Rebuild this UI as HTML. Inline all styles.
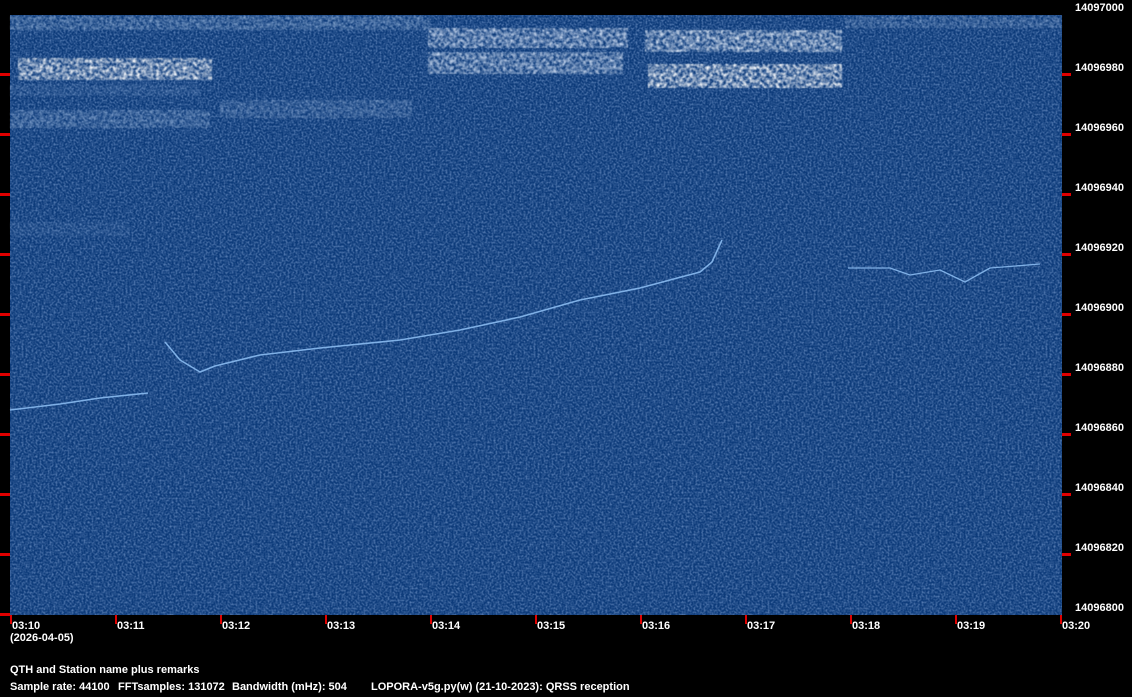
<!DOCTYPE html>
<html><head><meta charset="utf-8"><style>
html,body{margin:0;padding:0;background:#000;width:1132px;height:697px;overflow:hidden}
svg{display:block}
text{font-family:"Liberation Sans",sans-serif;font-weight:bold;font-size:11px;fill:#fff}
</style></head><body>
<svg width="1132" height="697" viewBox="0 0 1132 697">
<defs>
<filter id="n" x="0" y="0" width="100%" height="100%">
<feTurbulence type="fractalNoise" baseFrequency="0.5" numOctaves="2" seed="3" result="t"/>
<feColorMatrix type="matrix" values="0 0 0 0 0.45  0 0 0 0 0.62  0 0 0 0 0.95  1.5 0 0 0 -0.55" in="t"/>
</filter>
<filter id="b"><feTurbulence type="fractalNoise" baseFrequency="0.3" numOctaves="2" seed="7" result="t"/>
<feColorMatrix type="matrix" values="0 0 0 0 1  0 0 0 0 1  0 0 0 0 1  2.2 0 0 0 -0.75" in="t" result="m"/>
<feComposite in="SourceGraphic" in2="m" operator="in"/><feGaussianBlur stdDeviation="0.4"/></filter>
</defs>
<rect x="10" y="15" width="1052" height="600" fill="#0d3b7a"/>
<rect x="10" y="15" width="1052" height="600" filter="url(#n)" opacity="0.6"/>
<g filter="url(#b)">
<rect x="10" y="16" width="420" height="14" fill="#bcd3f0" opacity="0.5"/>
<rect x="845" y="16" width="217" height="12" fill="#bcd3f0" opacity="0.4"/>
<rect x="18" y="58" width="194" height="22" fill="#fff"/>
<rect x="10" y="84" width="190" height="12" fill="#9ab8e0" opacity="0.3"/>
<rect x="10" y="110" width="200" height="18" fill="#b8cfee" opacity="0.5"/>
<rect x="220" y="100" width="192" height="18" fill="#b8cfee" opacity="0.4"/>
<rect x="428" y="28" width="200" height="20" fill="#e6f0ff" opacity="0.85"/>
<rect x="428" y="52" width="195" height="22" fill="#e6f0ff" opacity="0.8"/>
<rect x="645" y="30" width="197" height="22" fill="#f0f6ff" opacity="0.9"/>
<rect x="648" y="64" width="194" height="24" fill="#fff"/>
<rect x="10" y="222" width="120" height="14" fill="#9ab8e0" opacity="0.2"/>
</g>
<g fill="none" stroke="#7fb0e6" stroke-width="1.6" stroke-linejoin="round">
<polyline points="10,410 60,404 100,398 148,393"/>
<polyline points="165,342 180,360 200,372 215,366 260,355 320,348 400,340 460,330 520,317 580,300 640,288 700,272 712,262 722,240"/>
<polyline stroke-width="1.3" points="848,268 890,268 910,275 940,270 965,282 990,268 1040,264"/>
</g>
<g fill="#e00000">
<rect x="0" y="73" width="10" height="3"/><rect x="0" y="133" width="10" height="3"/><rect x="0" y="193" width="10" height="3"/><rect x="0" y="253" width="10" height="3"/><rect x="0" y="313" width="10" height="3"/><rect x="0" y="373" width="10" height="3"/><rect x="0" y="433" width="10" height="3"/><rect x="0" y="493" width="10" height="3"/><rect x="0" y="553" width="10" height="3"/><rect x="0" y="613" width="10" height="3"/>
<rect x="1062" y="73" width="9" height="3"/><rect x="1062" y="133" width="9" height="3"/><rect x="1062" y="193" width="9" height="3"/><rect x="1062" y="253" width="9" height="3"/><rect x="1062" y="313" width="9" height="3"/><rect x="1062" y="373" width="9" height="3"/><rect x="1062" y="433" width="9" height="3"/><rect x="1062" y="493" width="9" height="3"/><rect x="1062" y="553" width="9" height="3"/>
<rect x="10" y="615" width="2" height="9"/><rect x="115" y="615" width="2" height="9"/><rect x="220" y="615" width="2" height="9"/><rect x="325" y="615" width="2" height="9"/><rect x="430" y="615" width="2" height="9"/><rect x="535" y="615" width="2" height="9"/><rect x="640" y="615" width="2" height="9"/><rect x="745" y="615" width="2" height="9"/><rect x="850" y="615" width="2" height="9"/><rect x="955" y="615" width="2" height="9"/><rect x="1060" y="615" width="2" height="9"/>
</g>
<g>
<text x="1075" y="11">14097000</text><text x="1075" y="71">14096980</text><text x="1075" y="131">14096960</text><text x="1075" y="191">14096940</text><text x="1075" y="251">14096920</text><text x="1075" y="311">14096900</text><text x="1075" y="371">14096880</text><text x="1075" y="431">14096860</text><text x="1075" y="491">14096840</text><text x="1075" y="551">14096820</text><text x="1075" y="611">14096800</text>
<text x="12" y="629">03:10</text><text x="117" y="629">03:11</text><text x="222" y="629">03:12</text><text x="327" y="629">03:13</text><text x="432" y="629">03:14</text><text x="537" y="629">03:15</text><text x="642" y="629">03:16</text><text x="747" y="629">03:17</text><text x="852" y="629">03:18</text><text x="957" y="629">03:19</text><text x="1062" y="629">03:20</text>
<text x="10" y="641">(2026-04-05)</text>
<text x="10" y="673">QTH and Station name plus remarks</text>
<text x="10" y="690">Sample rate: 44100</text><text x="118" y="690">FFTsamples: 131072</text><text x="232" y="690">Bandwidth (mHz): 504</text><text x="371" y="690">LOPORA-v5g.py(w) (21-10-2023): QRSS reception</text>
</g>
</svg>
</body></html>
